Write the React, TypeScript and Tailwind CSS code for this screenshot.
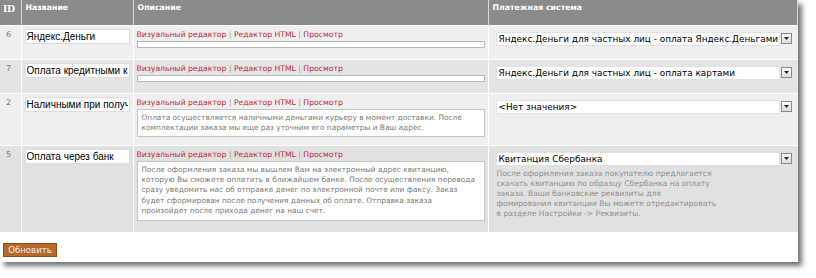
import React from 'react';

const verdana = { fontFamily: '"DejaVu Sans", Verdana, sans-serif' };

type Row = {
  id: string;
  name: string;
  desc: string[] | null;
  payment: string;
  note?: string[];
  h: string;
  bg: string;
};

const rows: Row[] = [
  { id: '6', name: 'Яндекс.Деньги', desc: null, payment: 'Яндекс.Деньги для частных лиц - оплата Яндекс.Деньгами', h: 'h-[34px]', bg: 'bg-[#efefef]' },
  { id: '7', name: 'Оплата кредитными картами', desc: null, payment: 'Яндекс.Деньги для частных лиц - оплата картами', h: 'h-[34px]', bg: 'bg-[#e4e4e4]' },
  {
    id: '2',
    name: 'Наличными при получении',
    desc: [
      'Оплата осуществляется наличными деньгами курьеру в момент доставки. После',
      'комплектации заказа мы еще раз уточним его параметры и Ваш адрес.',
    ],
    payment: '<Нет значения>',
    h: 'h-[52px]',
    bg: 'bg-[#efefef]',
  },
  {
    id: '5',
    name: 'Оплата через банк',
    desc: [
      'После оформления заказа мы вышлем Вам на электронный адрес квитанцию,',
      'которую Вы сможете оплатить в ближайшем банке. После осуществления перевода',
      'сразу уведомить нас об отправке денег по электронной почте или факсу. Заказ',
      'будет сформирован после получения данных об оплате. Отправка заказа',
      'произойдет после прихода денег на наш счет.',
    ],
    payment: 'Квитанция Сбербанка',
    note: [
      'После оформления заказа покупателю предлагается',
      'скачать квитанцию по образцу Сбербанка на оплату',
      'заказа. Ваши банковские реквизиты для',
      'фомирования квитанции Вы можете отредактировать',
      'в разделе Настройки -> Реквизиты.',
    ],
    h: 'h-[87px]',
    bg: 'bg-[#e1e1e1]',
  },
];

const EditorLinks = () => (
  <div className="text-[7.7px] leading-[10px] whitespace-nowrap text-[#bf2a2f]" style={verdana}>
    <span>Визуальный редактор</span>
    <span className="text-[#9a9a9a]"> | </span>
    <span>Редактор HTML</span>
    <span className="text-[#9a9a9a]"> | </span>
    <span>Просмотр</span>
  </div>
);

const FakeSelect = ({ value }: { value: string }) => (
  <div className="flex items-center gap-[1px] w-[296px]">
    <div
      className="flex-1 h-[14px] bg-white border border-[#e2e2e2] pl-[2px] text-[8.9px] leading-[12px] text-black whitespace-nowrap overflow-hidden"
      style={verdana}
    >
      {value}
    </div>
    <div className="w-[11px] h-[11px] border border-[#8a8a8a] bg-gradient-to-b from-[#fbfbfb] to-[#dcdcdc] flex items-center justify-center">
      <svg width="5" height="3" viewBox="0 0 5 3">
        <path d="M0 0h5L2.5 3z" fill="#222" />
      </svg>
    </div>
  </div>
);

export default function App() {
  return (
    <div className="w-[816px] h-[278px] bg-white">
      <div className="w-[798px] bg-white shadow-[4px_4px_5px_rgba(0,0,0,0.55)] pb-[5px]">
        <table className="w-full border-collapse table-fixed">
          <colgroup>
            <col className="w-[21px]" />
            <col className="w-[112px]" />
            <col className="w-[355px]" />
            <col />
          </colgroup>
          <thead>
            <tr className="h-[25px] bg-[#8b8b8b] text-white">
              <th className="border-r border-[#d8d8d8] align-top pt-[2px] pl-[3px] text-left text-[11px] leading-[12px] font-bold" style={{ fontFamily: '"Liberation Serif", serif' }}>
                ID
              </th>
              {['Название', 'Описание', 'Платежная система'].map((t) => (
                <th
                  key={t}
                  className="border-r border-[#d8d8d8] align-top pt-[3px] pl-[4px] text-left text-[7.8px] leading-[10px] font-bold"
                  style={verdana}
                >
                  {t}
                </th>
              ))}
            </tr>
          </thead>
          <tbody>
            {rows.map((r) => (
              <tr key={r.id} className={`${r.h} ${r.bg} border-t border-white`}>
                <td className="align-top border-r border-white pl-[6px] pt-[4px] text-[7.8px] leading-[10px] text-[#777]" style={verdana}>
                  {r.id}
                </td>
                <td className="align-top border-r border-white pl-[3px] pt-[3px] leading-none">
                  <input
                    readOnly
                    defaultValue={r.name}
                    className="block w-[105px] h-[15px] bg-white border border-[#dcdcdc] px-[1px] text-[10px] leading-[13px] text-black outline-none"
                    style={{ fontFamily: '"Liberation Sans", Arial, sans-serif' }}
                  />
                </td>
                <td className="align-top border-r border-white pl-[3px] pr-[3px] pt-[4px] leading-none">
                  <EditorLinks />
                  {r.desc ? (
                    <div
                      className="mt-[1px] bg-white border border-[#c4c4c4] px-[4px] py-[3px] text-[7.4px] leading-[10.4px] text-[#7a7a7a] whitespace-nowrap overflow-hidden"
                      style={verdana}
                    >
                      {r.desc.map((l, i) => (
                        <div key={i}>{l}</div>
                      ))}
                    </div>
                  ) : (
                    <div className="mt-[1px] h-[7px] bg-white border border-[#b8b8b8]" />
                  )}
                </td>
                <td className="align-top pl-[7px] pt-[6px] leading-none">
                  <FakeSelect value={r.payment} />
                  {r.note && (
                    <div className="mt-[3px] pl-[1px] text-[7.6px] leading-[10.2px] text-[#8f8f8f] whitespace-nowrap" style={verdana}>
                      {r.note.map((l, i) => (
                        <div key={i}>{l}</div>
                      ))}
                    </div>
                  )}
                </td>
              </tr>
            ))}
          </tbody>
        </table>
        <div className="flex pl-[3px] pt-[11px]">
          <button
            className="h-[14px] w-[54px] bg-[#b6692e] border border-[#8f4c1c] text-[#f6ebe1] text-[8.6px] leading-[12px]"
            style={verdana}
          >
            Обновить
          </button>
        </div>
      </div>
    </div>
  );
}
